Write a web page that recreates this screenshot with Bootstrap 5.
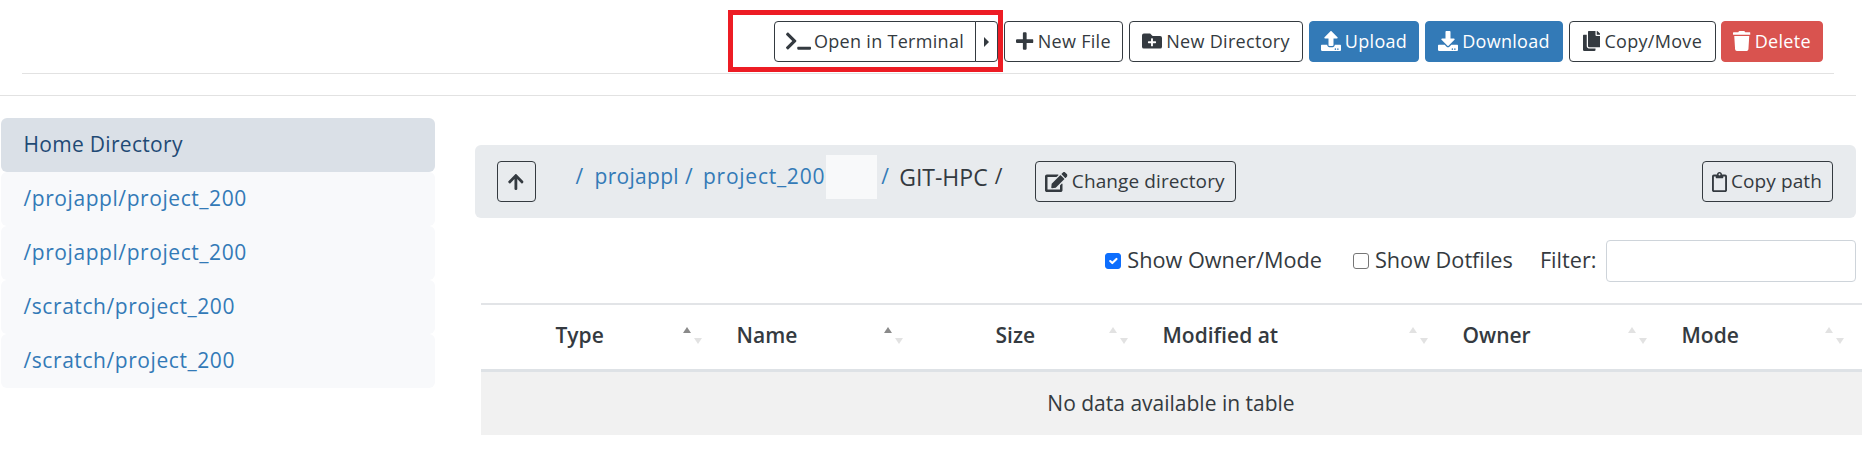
<!DOCTYPE html>
<html lang="en"><head><meta charset="utf-8"><title>Files</title>
<link href="https://cdn.jsdelivr.net/npm/bootstrap@5.3.0/dist/css/bootstrap.min.css" rel="stylesheet">
<style>
html,body{height:458px;overflow:hidden}
body{font-family:"Open Sans","Liberation Sans",sans-serif;color:#343a40;font-size:18px;background:#fff}
.sprites{width:0;height:0;overflow:hidden;display:block}
.ico{fill:currentColor;height:20px;width:auto;flex:none}
.toolbar{height:73px;padding:21px 51px 0 0;gap:6px}
.tbtn{height:41px;font-size:18px;letter-spacing:.3px;padding:0 6px 1px;border-radius:4px;border:1px solid #343a40;color:#343a40;background:#fff;display:inline-flex;align-items:center;gap:4px;white-space:nowrap}
.tbtn:hover{color:#343a40;background:#fff}
.tbtn.blue{background:#337ab7;border-color:#337ab7;color:#fff}
.tbtn.red{background:#d9534f;border-color:#d9534f;color:#fff;margin-left:-1px}
.term-main{flex:1;border-radius:4px 0 0 4px;padding:0 0 1px 11px;gap:3px}
.term-caret{width:23px;margin-left:-1px;border-radius:0 4px 4px 0;justify-content:center;padding:0}
.caret-r{width:0;height:0;border-left:5px solid #343a40;border-top:5px solid transparent;border-bottom:5px solid transparent}
.annot{position:absolute;left:-46.5px;top:-11px;width:275.5px;height:62px;border:5px solid #ed1c24;pointer-events:none}
.w-term{width:224px}.w-nf{width:119px}.w-nd{width:174px}.w-up{width:110px}.w-dl{width:138px}.w-cm{width:147px}.w-del{width:102px}
.rule1{height:1px;background:#e2e2e2;margin:0 40px 0 22px}
.rule2{height:1px;background:#e2e2e2;margin:21px 18px 0 0}
.main-row{margin-top:22px;padding-left:1px}
.side-col{width:434px;flex:none}
.side-item{display:block;height:54px;line-height:52px;padding:0 23px 0 22.5px;background:#f8f9fb;color:#337ab7;font-size:21px;letter-spacing:.57px;text-decoration:none;border-radius:6px;white-space:nowrap}
.side-item.on{background:#dae0e7;color:#1f4a75;letter-spacing:.3px}
.content-col{margin-left:39.5px;width:1387.5px;margin-top:27px}
.pathbar{height:73px;width:1381px;background:#e8ebee;border-radius:6px;padding:0 23px 0 22px}
.sbtn{height:41px;font-size:19px;letter-spacing:.1px;padding:0 4px;border:1px solid #343a40;border-radius:4px;color:#343a40;background:transparent;display:inline-flex;align-items:center;gap:4px;white-space:nowrap}
.sbtn:hover{color:#343a40}
.up-btn{width:39px;justify-content:center;padding:0}
.up-btn .ico{height:18px}
.crumbs{margin-left:40px;font-size:21px;letter-spacing:.3px;width:459px;flex:none;height:44px;margin-bottom:9px}
.crumbs a{color:#337ab7;text-decoration:none}
.gap-a{margin-left:11px}.gap-b{margin-left:6px}.gap-c{margin-left:10px}.gap-d{margin-left:7px}
.crumbs .wide-txt{letter-spacing:.75px}
.txt-dark{font-size:23px;letter-spacing:0}
.redact{width:51px;height:44px;background:#f8f9fa;margin:0 4px 0 1px;flex:none}
.chg-btn{width:201px;justify-content:center;margin-right:auto}
.copy-btn{width:131px;justify-content:center}
.filters{height:64px;width:1381px;font-size:21.7px;padding-top:22px;margin-bottom:21px}
.filt-txt{margin-top:-2px}
.filters .form-check-input{width:16px;height:16px;margin:0 6px 0 0;border-radius:3px;flex:none;border-color:#767676}
.filters .form-check-input:checked{border-color:#0d6efd}
.filters .f2{margin-left:31px}
.f3{margin-left:27px}
.filters .flt-input{width:250px;height:42px;margin-left:9px;border:1px solid #ced4da;border-radius:4px}
.grid-tbl{width:1381px;table-layout:fixed;margin-left:6px;border-top:2px solid #e2e4e7;margin-bottom:0;margin-top:0}
.grid-tbl th{font-size:21px;font-weight:600;height:66px;padding:0 8px 2px 27px;color:#343a40;border-bottom:3px solid #dee2e6;vertical-align:middle}
.grid-tbl th>div{display:flex;align-items:center;justify-content:space-between}
.grid-tbl td{height:65px;background:#f1f1f1;text-align:center;font-size:21px;vertical-align:middle;border:0;color:#343a40}
.c0{width:48px}.c1{width:181px}.c2{width:201px}.c3{width:225px}.c4{width:300px}.c5{width:219px}.c6{width:207px}
.grid-tbl th.size-th{padding-left:85px}
.grid-tbl th.last-th{padding-right:18px}
.sort-ico{width:19px;height:17px;flex:none}
</style></head><body>
<svg class="sprites" aria-hidden="true"><defs>
<symbol id="i-term" viewBox="0 0 640 512"><path d="M257.981 272.971L63.638 467.314c-9.373 9.373-24.569 9.373-33.941 0L7.029 444.647c-9.357-9.357-9.375-24.522-.04-33.901L161.011 256 6.99 101.255c-9.335-9.379-9.317-24.544.04-33.901l22.667-22.667c9.373-9.373 24.569-9.373 33.941 0L257.981 239.03c9.373 9.372 9.373 24.568 0 33.941zM640 456v-32c0-13.255-10.745-24-24-24H312c-13.255 0-24 10.745-24 24v32c0 13.255 10.745 24 24 24h304c13.255 0 24-10.745 24-24z"/></symbol>
<symbol id="i-plus" viewBox="0 0 448 512"><path d="M416 208H272V64c0-17.67-14.33-32-32-32h-32c-17.67 0-32 14.33-32 32v144H32c-17.67 0-32 14.33-32 32v32c0 17.67 14.33 32 32 32h144v144c0 17.67 14.33 32 32 32h32c17.67 0 32-14.33 32-32V304h144c17.67 0 32-14.33 32-32v-32c0-17.67-14.33-32-32-32z"/></symbol>
<symbol id="i-folder" viewBox="0 0 512 512"><path d="M464,128H272L208,64H48A48,48,0,0,0,0,112V400a48,48,0,0,0,48,48H464a48,48,0,0,0,48-48V176A48,48,0,0,0,464,128ZM359.5,296a16,16,0,0,1-16,16h-64v64a16,16,0,0,1-16,16h-16a16,16,0,0,1-16-16V312h-64a16,16,0,0,1-16-16V280a16,16,0,0,1,16-16h64V200a16,16,0,0,1,16-16h16a16,16,0,0,1,16,16v64h64a16,16,0,0,1,16,16Z"/></symbol>
<symbol id="i-up" viewBox="0 0 512 512"><path d="M296 384h-80c-13.3 0-24-10.7-24-24V192h-87.7c-17.8 0-26.7-21.5-14.1-34.1L242.3 5.7c7.5-7.5 19.8-7.5 27.3 0l152.2 152.2c12.6 12.6 3.7 34.1-14.1 34.1H320v168c0 13.3-10.7 24-24 24zm216-8v112c0 13.3-10.7 24-24 24H24c-13.3 0-24-10.7-24-24V376c0-13.3 10.7-24 24-24h136v8c0 30.9 25.1 56 56 56h80c30.9 0 56-25.1 56-56v-8h136c13.3 0 24 10.7 24 24zm-124 88c0-11-9-20-20-20s-20 9-20 20 9 20 20 20 20-9 20-20zm64 0c0-11-9-20-20-20s-20 9-20 20 9 20 20 20 20-9 20-20z"/></symbol>
<symbol id="i-down" viewBox="0 0 512 512"><path d="M216 0h80c13.3 0 24 10.7 24 24v168h87.7c17.8 0 26.7 21.5 14.1 34.1L269.7 378.3c-7.5 7.5-19.8 7.5-27.3 0L90.1 226.1c-12.6-12.6-3.7-34.1 14.1-34.1H192V24c0-13.3 10.7-24 24-24zm296 376v112c0 13.3-10.7 24-24 24H24c-13.3 0-24-10.7-24-24V376c0-13.3 10.7-24 24-24h146.7l49 49c20.1 20.1 52.5 20.1 72.6 0l49-49H488c13.3 0 24 10.7 24 24zm-124 88c0-11-9-20-20-20s-20 9-20 20 9 20 20 20 20-9 20-20zm64 0c0-11-9-20-20-20s-20 9-20 20 9 20 20 20 20-9 20-20z"/></symbol>
<symbol id="i-copy" viewBox="0 0 448 512"><path d="M320 448v40c0 13.255-10.745 24-24 24H24c-13.255 0-24-10.745-24-24V120c0-13.255 10.745-24 24-24h72v296c0 30.879 25.121 56 56 56h168zm0-344V0H152c-13.255 0-24 10.745-24 24v368c0 13.255 10.745 24 24 24h272c13.255 0 24-10.745 24-24V128H344c-13.2 0-24-10.8-24-24zm120.971-31.029L375.029 7.029A24 24 0 0 0 358.059 0H352v96h96v-6.059a24 24 0 0 0-7.029-16.97z"/></symbol>
<symbol id="i-trash" viewBox="0 0 448 512"><path d="M432 32H312l-9.4-18.7A24 24 0 0 0 281.1 0H166.8a23.72 23.72 0 0 0-21.4 13.3L136 32H16A16 16 0 0 0 0 48v32a16 16 0 0 0 16 16h416a16 16 0 0 0 16-16V48a16 16 0 0 0-16-16zM53.2 467a48 48 0 0 0 47.9 45h245.8a48 48 0 0 0 47.9-45L416 128H32z"/></symbol>
<symbol id="i-arrow" viewBox="0 0 448 512"><path d="M34.9 289.5l-22.2-22.2c-9.4-9.4-9.4-24.6 0-33.9L207 39c9.4-9.4 24.6-9.4 33.9 0l194.3 194.3c9.4 9.4 9.4 24.6 0 33.9L413 289.4c-9.5 9.5-25 9.3-34.3-.4L264 168.6V456c0 13.3-10.7 24-24 24h-32c-13.3 0-24-10.7-24-24V168.6L69.2 289.1c-9.3 9.8-24.8 10-34.3.4z"/></symbol>
<symbol id="i-edit" viewBox="0 0 576 512"><path d="M402.6 83.2l90.2 90.2c3.8 3.8 3.8 10 0 13.8L274.4 405.6l-92.8 10.3c-12.4 1.4-22.9-9.1-21.5-21.5l10.3-92.8L388.8 83.2c3.8-3.8 10-3.8 13.8 0zm162-22.9l-48.8-48.8c-15.2-15.2-39.9-15.2-55.2 0l-35.4 35.4c-3.8 3.8-3.8 10 0 13.8l90.2 90.2c3.8 3.8 10 3.8 13.8 0l35.4-35.4c15.2-15.3 15.2-40 0-55.2zM384 346.2V448H64V128h229.8c3.2 0 6.2-1.3 8.5-3.5l40-40c7.6-7.6 2.2-20.5-8.5-20.5H48C21.5 64 0 85.5 0 112v352c0 26.5 21.5 48 48 48h352c26.5 0 48-21.5 48-48V306.2c0-10.7-12.9-16-20.5-8.5l-40 40c-2.2 2.3-3.5 5.3-3.5 8.5z"/></symbol>
<symbol id="i-clip" viewBox="0 0 384 512"><path d="M336 64h-80c0-35.3-28.7-64-64-64s-64 28.7-64 64H48C21.5 64 0 85.5 0 112v352c0 26.5 21.5 48 48 48h288c26.5 0 48-21.5 48-48V112c0-26.5-21.5-48-48-48zM192 40c13.3 0 24 10.7 24 24s-10.7 24-24 24-24-10.7-24-24 10.7-24 24-24zm144 418c0 3.3-2.7 6-6 6H54c-3.3 0-6-2.7-6-6V118c0-3.3 2.7-6 6-6h42v36c0 6.6 5.4 12 12 12h168c6.6 0 12-5.4 12-12v-36h42c3.3 0 6 2.7 6 6z"/></symbol>
<symbol id="s-a" viewBox="0 0 19 17"><path fill="#8a8a8a" d="M0 6 4 0l4 6z"/><path fill="#e2e2e2" d="m11 11 4 6 4-6z"/></symbol>
<symbol id="s-n" viewBox="0 0 19 17"><path fill="#e2e2e2" d="M0 6 4 0l4 6z"/><path fill="#e2e2e2" d="m11 11 4 6 4-6z"/></symbol>
</defs></svg>

<div class="toolbar d-flex justify-content-end align-items-start">
  <div class="position-relative d-flex w-term">
    <a href="#" class="btn tbtn term-main"><svg class="ico" viewBox="0 0 640 512"><use href="#i-term"/></svg>Open in Terminal</a>
    <a href="#" class="btn tbtn term-caret"><span class="caret-r"></span></a>
    <div class="annot"></div>
  </div>
  <a href="#" class="btn tbtn justify-content-center w-nf"><svg class="ico" viewBox="0 0 448 512"><use href="#i-plus"/></svg>New File</a>
  <a href="#" class="btn tbtn justify-content-center w-nd"><svg class="ico" viewBox="0 0 512 512"><use href="#i-folder"/></svg>New Directory</a>
  <a href="#" class="btn tbtn blue justify-content-center w-up"><svg class="ico" viewBox="0 0 512 512"><use href="#i-up"/></svg>Upload</a>
  <a href="#" class="btn tbtn blue justify-content-center w-dl"><svg class="ico" viewBox="0 0 512 512"><use href="#i-down"/></svg>Download</a>
  <a href="#" class="btn tbtn justify-content-center w-cm"><svg class="ico" viewBox="0 0 448 512"><use href="#i-copy"/></svg>Copy/Move</a>
  <a href="#" class="btn tbtn red justify-content-center w-del"><svg class="ico" viewBox="0 0 448 512"><use href="#i-trash"/></svg>Delete</a>
</div>
<div class="rule1"></div>
<div class="rule2"></div>

<div class="main-row d-flex align-items-start">
  <div class="side-col">
    <a href="#" class="side-item on">Home Directory</a>
    <a href="#" class="side-item">/projappl/project_200</a>
    <a href="#" class="side-item">/projappl/project_200</a>
    <a href="#" class="side-item">/scratch/project_200</a>
    <a href="#" class="side-item">/scratch/project_200</a>
  </div>
  <div class="content-col">
    <div class="pathbar d-flex align-items-center">
      <a href="#" class="btn sbtn up-btn"><svg class="ico" viewBox="0 0 448 512"><use href="#i-arrow"/></svg></a>
      <div class="crumbs d-flex align-items-center text-nowrap"><a href="#">/</a><a href="#" class="gap-a">projappl</a><a href="#" class="gap-b">/</a><a href="#" class="gap-c wide-txt">project_200</a><span class="redact"></span><a href="#">/</a><span class="gap-c txt-dark">GIT-HPC</span><span class="gap-d">/</span></div>
      <a href="#" class="btn sbtn chg-btn"><svg class="ico" viewBox="0 0 576 512"><use href="#i-edit"/></svg>Change directory</a>
      <a href="#" class="btn sbtn copy-btn"><svg class="ico" viewBox="0 0 384 512"><use href="#i-clip"/></svg>Copy path</a>
    </div>
    <div class="filters d-flex justify-content-end align-items-center">
      <input class="form-check-input" type="checkbox" checked aria-label="Show Owner/Mode"><span class="filt-txt">Show Owner/Mode</span>
      <input class="form-check-input f2" type="checkbox" aria-label="Show Dotfiles"><span class="filt-txt">Show Dotfiles</span>
      <span class="f3 filt-txt">Filter:</span><input class="form-control flt-input" type="text" aria-label="Filter">
    </div>
    <table class="table grid-tbl">
      <colgroup><col class="c0"><col class="c1"><col class="c2"><col class="c3"><col class="c4"><col class="c5"><col class="c6"></colgroup>
      <thead><tr>
        <th></th>
        <th><div>Type<svg class="sort-ico"><use href="#s-a"/></svg></div></th>
        <th><div>Name<svg class="sort-ico"><use href="#s-a"/></svg></div></th>
        <th class="size-th"><div>Size<svg class="sort-ico"><use href="#s-n"/></svg></div></th>
        <th><div>Modified at<svg class="sort-ico"><use href="#s-n"/></svg></div></th>
        <th><div>Owner<svg class="sort-ico"><use href="#s-n"/></svg></div></th>
        <th class="last-th"><div>Mode<svg class="sort-ico"><use href="#s-n"/></svg></div></th>
      </tr></thead>
      <tbody><tr><td colspan="7">No data available in table</td></tr></tbody>
    </table>
  </div>
</div>
</body></html>
